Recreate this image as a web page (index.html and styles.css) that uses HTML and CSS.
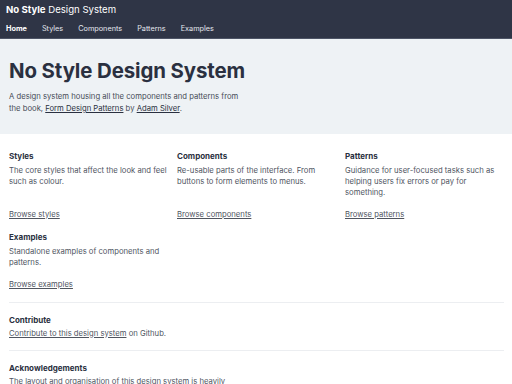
FILE: index.html
```html
<!DOCTYPE html>
<html lang="en">
<head>
  <meta charset="UTF-8">
  <title>No Style Design System</title>
  <link rel="stylesheet" href="styles.css">
</head>
<body>
  <div class="masthead">
    <div class="brand"><b>No Style</b> Design System</div>
    <div class="nav">
      <a class="current" href="#">Home</a>
      <a href="#">Styles</a>
      <a href="#">Components</a>
      <a href="#">Patterns</a>
      <a href="#">Examples</a>
    </div>
  </div>

  <div class="hero">
    <h1>No Style Design System</h1>
    <p>A design system housing all the components and patterns from the book, <a href="#">Form Design Patterns</a> by <a href="#">Adam Silver</a>.</p>
  </div>

  <div class="main">
    <div class="cards">
      <div class="card">
        <h2>Styles</h2>
        <p>The core styles that affect the look and feel such as colour.</p>
        <a href="#">Browse styles</a>
      </div>
      <div class="card">
        <h2>Components</h2>
        <p>Re-usable parts of the interface. From buttons to form elements to menus.</p>
        <a href="#">Browse components</a>
      </div>
      <div class="card">
        <h2>Patterns</h2>
        <p>Guidance for user-focused tasks such as helping users fix errors or pay for something.</p>
        <a href="#">Browse patterns</a>
      </div>
      <div class="card">
        <h2>Examples</h2>
        <p>Standalone examples of components and patterns.</p>
        <a href="#">Browse examples</a>
      </div>
    </div>

    <div class="section">
      <h2>Contribute</h2>
      <p><a href="#">Contribute to this design system</a> on Github.</p>
    </div>

    <div class="section">
      <h2>Acknowledgements</h2>
      <p>The layout and organisation of this design system is heavily inspired by the GOV.UK Design System.</p>
    </div>
  </div>
</body>
</html>
```

FILE: styles.css
```css
* { box-sizing: border-box; }
body {
  margin: 0;
  font-family: Inter, "Noto Sans", sans-serif;
  color: #2a3040;
  background: #fff;
}

.masthead {
  background: #2f3546;
  color: #fff;
  padding: 4px 6px 0;
  border-bottom: 1px solid #4d5466;
}

.brand {
  font-size: 9.6px;
  line-height: 12px;
}

.nav {
  display: flex;
  gap: 15px;
  padding: 6.5px 0 4.5px;
}

.nav a {
  color: #e4e7ee;
  text-decoration: none;
  font-size: 7.3px;
  line-height: 11px;
}

.nav a.current {
  color: #fff;
  font-weight: bold;
}

.hero {
  background: #eef2f5;
  padding: 19px 9px 19px;
}

.hero h1 {
  margin: 0 0 7px;
  font-size: 20.4px;
  line-height: 26px;
  letter-spacing: -0.1px;
}

.hero p {
  margin: 0;
  max-width: 240px;
  font-size: 7.7px;
  line-height: 12px;
  color: #474c57;
}

.hero a { color: #2a3040; }

.main {
  padding: 16px 8px 0 9px;
}

.cards {
  display: grid;
  grid-template-columns: repeat(3, 1fr);
  gap: 11.5px 9px;
  padding-bottom: 12.5px;
}

.card {
  display: flex;
  flex-direction: column;
}

h2 {
  margin: 0 0 2.5px;
  font-size: 8px;
  line-height: 12px;
  font-weight: bold;
}

p {
  margin: 0;
  font-size: 7.7px;
  line-height: 11px;
  color: #50555f;
}

.card p { margin-bottom: 11px; }

.card a {
  margin-top: auto;
  font-size: 7.7px;
  line-height: 11px;
}

a { color: #50555f; }

.section {
  border-top: 1px solid #eceef1;
  padding: 11px 0 11.5px;
}

.section h2 { margin-bottom: 1.5px; }

.section p { max-width: 240px; }
```
